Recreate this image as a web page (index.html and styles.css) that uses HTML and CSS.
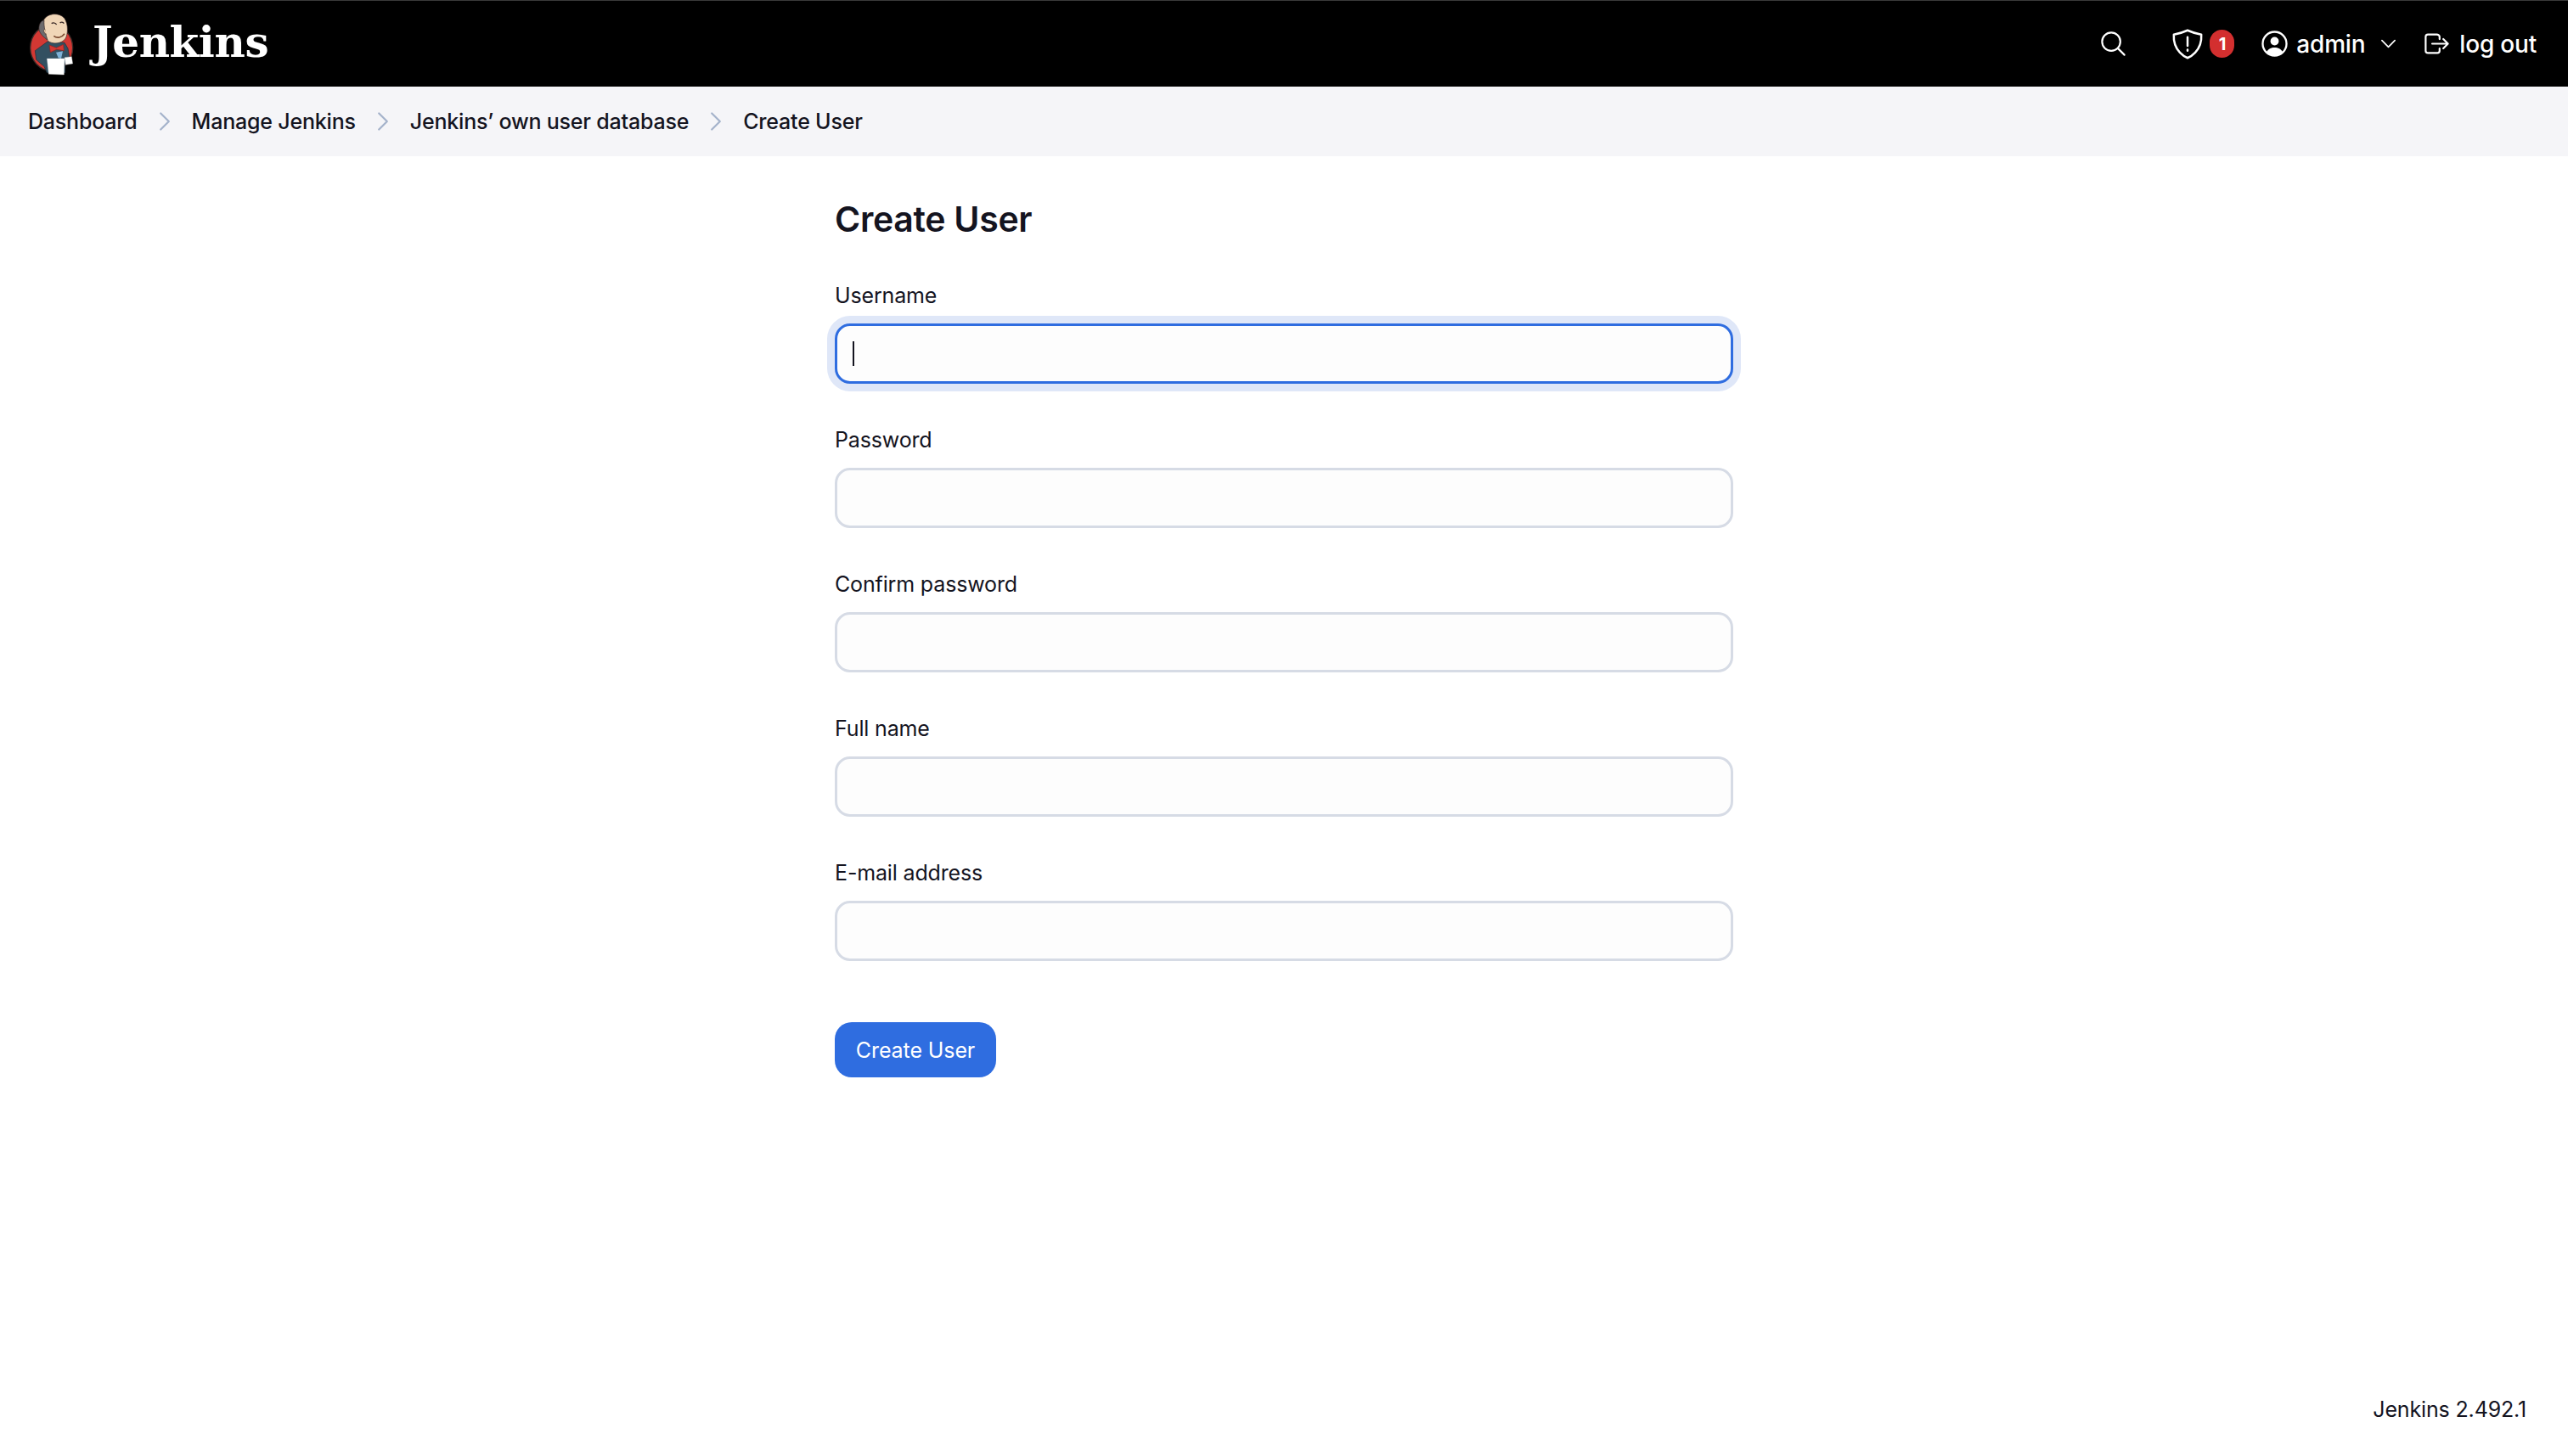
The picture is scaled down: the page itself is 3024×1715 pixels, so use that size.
FILE: index.html
```html
<!DOCTYPE html>
<html lang="en">
  <head>
    <meta charset="UTF-8" />
    <title>Create User - Jenkins</title>
    <link rel="stylesheet" href="styles.css">
  </head>
  <body>
    <header class="topbar">
      <a class="brand" href="#">
        <svg class="brand-logo" viewBox="0 0 240 270">
          <ellipse cx="122" cy="148" rx="75" ry="81" fill="#d33833" stroke="#3b2b28" stroke-width="4" />
          <path d="M64 158 L108 126 L168 130 L180 150 L186 186 L170 204 L170 236 L106 236 L96 214 L68 190 Z" fill="#335061" stroke="#1f2f3a" stroke-width="2" />
          <path d="M94 50 C108 24 150 22 168 44 C182 66 180 98 172 114 C160 134 124 138 108 122 C90 104 84 70 94 50 Z" fill="#f0d6b7" stroke="#3b2b28" stroke-width="2" />
          <path d="M96 50 C84 52 76 66 78 84 C82 100 94 110 108 120 C100 96 94 72 96 50 Z" fill="#6d6b6d" stroke="#3b2b28" stroke-width="2" />
          <path d="M100 84 C92 78 92 96 104 100" fill="#e8c8a4" stroke="#3b2b28" stroke-width="2" />
          <path d="M122 62 C128 58 136 60 140 66 M152 60 C156 56 162 56 166 62" fill="none" stroke="#3b2b28" stroke-width="4" />
          <path d="M130 106 C142 116 158 112 168 98" fill="none" stroke="#7a4a30" stroke-width="5" />
          <path d="M138 164 L162 160 L156 186 L146 184 Z" fill="#7fb2d8" />
          <path d="M114 138 L139 148 L164 136 L166 158 L140 154 L118 164 Z" fill="#d33833" stroke="#8c1f1c" stroke-width="2" />
          <path d="M106 186 L168 186 L166 243 L112 241 Z" fill="#fff" stroke="#dadada" stroke-width="1" />
          <path d="M168 182 L193 179 L197 204 L172 208 Z" fill="#fff" stroke="#bbb" stroke-width="1" />
        </svg>
        <span class="brand-name">Jenkins</span>
      </a>
      <nav class="topnav">
        <svg class="icon icon-search" viewBox="0 0 512 512">
          <path d="M221.09 64a157.09 157.09 0 10157.09 157.09A157.1 157.1 0 00221.09 64z" />
          <path d="M338.29 338.29L448 448" />
        </svg>
        <div class="alerts">
          <svg class="icon icon-shield" viewBox="0 0 512 512">
            <path d="M463.1 112.37C373.68 96.33 336.71 84.45 256 48c-80.71 36.45-117.68 48.33-207.1 64.37C32.7 369.13 240.58 457.79 256 464c15.42-6.21 223.3-94.87 207.1-351.63z" />
            <path d="M256 150v130M256 340v16" />
          </svg>
          <span class="badge">1</span>
        </div>
        <div class="nav-item nav-user">
          <svg class="icon icon-user" viewBox="0 0 512 512">
            <circle cx="256" cy="256" r="194" />
            <circle class="solid" cx="256" cy="214" r="68" />
            <path class="solid" d="M124 392 C150 340 200 318 256 318 s106 22 132 74 A190 190 0 0 1 124 392z" />
          </svg>
          <span>admin</span>
          <svg class="icon icon-caret" viewBox="0 0 512 512">
            <path d="M112 184l144 144 144-144" />
          </svg>
        </div>
        <div class="nav-item nav-logout">
          <svg class="icon icon-logout" viewBox="0 0 512 512">
            <path d="M304 336v40a40 40 0 01-40 40H104a40 40 0 01-40-40V136a40 40 0 0140-40h152c22.09 0 48 17.91 48 40v40M368 336l80-80-80-80M176 256h256" />
          </svg>
          <span>log out</span>
        </div>
      </nav>
    </header>

    <div class="breadcrumbs">
      <a href="#">Dashboard</a>
      <svg class="crumb-sep" viewBox="0 0 512 512"><path d="M184 112l144 144-144 144" /></svg>
      <a href="#">Manage Jenkins</a>
      <svg class="crumb-sep" viewBox="0 0 512 512"><path d="M184 112l144 144-144 144" /></svg>
      <a href="#">Jenkins’ own user database</a>
      <svg class="crumb-sep" viewBox="0 0 512 512"><path d="M184 112l144 144-144 144" /></svg>
      <a href="#">Create User</a>
    </div>

    <main class="content">
      <h1>Create User</h1>
      <form action="#" method="POST">
        <div class="field">
          <label for="username">Username</label>
          <div class="input-wrap">
            <input class="focused" type="text" id="username" name="username" />
            <span class="caret"></span>
          </div>
        </div>
        <div class="field">
          <label for="password1">Password</label>
          <input type="password" id="password1" name="password1" />
        </div>
        <div class="field">
          <label for="password2">Confirm password</label>
          <input type="password" id="password2" name="password2" />
        </div>
        <div class="field">
          <label for="fullname">Full name</label>
          <input type="text" id="fullname" name="fullname" />
        </div>
        <div class="field">
          <label for="email">E-mail address</label>
          <input type="text" id="email" name="email" />
        </div>
        <button class="submit" type="submit">Create User</button>
      </form>
    </main>

    <footer class="page-footer">Jenkins 2.492.1</footer>
  </body>
</html>
```

FILE: styles.css
```css
* {
  box-sizing: border-box;
}

body {
  margin: 0;
  min-height: 100vh;
  display: flex;
  flex-direction: column;
  background-color: #fff;
  color: #14141f;
  font-family: Inter, "Liberation Sans", sans-serif;
  font-size: 25px;
  letter-spacing: -0.15px;
}

a {
  color: inherit;
  text-decoration: none;
}

.topbar {
  height: 102px;
  display: flex;
  align-items: center;
  justify-content: space-between;
  padding: 0 37px 0 20px;
  background-color: #000;
  border-top: 1px solid #3a3a3a;
  color: #fff;
}

.brand {
  display: flex;
  align-items: center;
}

.brand-logo {
  width: 80px;
  height: 90px;
}

.brand-name {
  margin: -4px 0 0 9px;
  font-family: "DejaVu Serif", serif;
  font-size: 50px;
  font-weight: 700;
  letter-spacing: -0.4px;
}

.topnav {
  display: flex;
  align-items: center;
  font-size: 28px;
  font-weight: 500;
  letter-spacing: -0.2px;
}

.icon {
  flex: none;
  fill: none;
  stroke: #fff;
  stroke-width: 32;
  stroke-linecap: round;
  stroke-linejoin: round;
}

.icon .solid {
  fill: #fff;
  stroke: none;
}

.icon-search {
  width: 35px;
  height: 35px;
}

.alerts {
  display: flex;
  align-items: center;
  margin-left: 50px;
}

.icon-shield {
  width: 40px;
  height: 40px;
}

.badge {
  width: 29px;
  height: 33px;
  margin-left: 6px;
  display: flex;
  align-items: center;
  justify-content: center;
  border-radius: 15px;
  background-color: #d32f2f;
  font-size: 20px;
  font-weight: 700;
}

.nav-item {
  display: flex;
  align-items: center;
  gap: 5px;
  margin-left: 22px;
}

.nav-user {
  gap: 7px;
  margin-left: 29px;
}

.nav-logout {
  gap: 9px;
  margin-left: 26px;
}

.icon-user {
  width: 37px;
  height: 37px;
}

.icon-caret {
  width: 27px;
  height: 27px;
  margin-left: 7px;
}

.icon-logout {
  width: 35px;
  height: 35px;
}

.breadcrumbs {
  height: 82px;
  display: flex;
  align-items: center;
  gap: 15px;
  padding: 0 33px;
  background-color: #f5f5f8;
  font-weight: 500;
  letter-spacing: -0.2px;
}

.crumb-sep {
  width: 34px;
  height: 34px;
  fill: none;
  stroke: #a5b3cb;
  stroke-width: 34;
  stroke-linecap: round;
  stroke-linejoin: round;
}

.content {
  width: 1058px;
  margin: 0 auto;
  padding-top: 48px;
}

h1 {
  margin: 0 0 45px;
  font-size: 41px;
  font-weight: 600;
  line-height: 52px;
  letter-spacing: -0.3px;
}

label {
  display: block;
  margin-bottom: 14px;
  line-height: 38px;
}

.field {
  margin-bottom: 47px;
}

.input-wrap {
  position: relative;
}

input {
  display: block;
  width: 100%;
  height: 71px;
  padding: 0 20px;
  border: 3px solid #d6dbe5;
  border-radius: 18px;
  background-color: #fdfdfd;
  font: inherit;
  outline: none;
}

input.focused {
  border-color: #2f6de0;
  box-shadow: 0 0 0 9px #dfe7f8;
}

.caret {
  position: absolute;
  left: 21px;
  top: 21px;
  width: 2px;
  height: 29px;
  background-color: #14141f;
}

.submit {
  display: block;
  width: 190px;
  height: 65px;
  margin-top: 72px;
  border: none;
  border-radius: 20px;
  background-color: #2f6de0;
  color: #fff;
  font: inherit;
  letter-spacing: -0.1px;
  cursor: pointer;
}

.page-footer {
  margin-top: auto;
  padding: 0 49px 39px 0;
  text-align: right;
  line-height: 32px;
}
```
